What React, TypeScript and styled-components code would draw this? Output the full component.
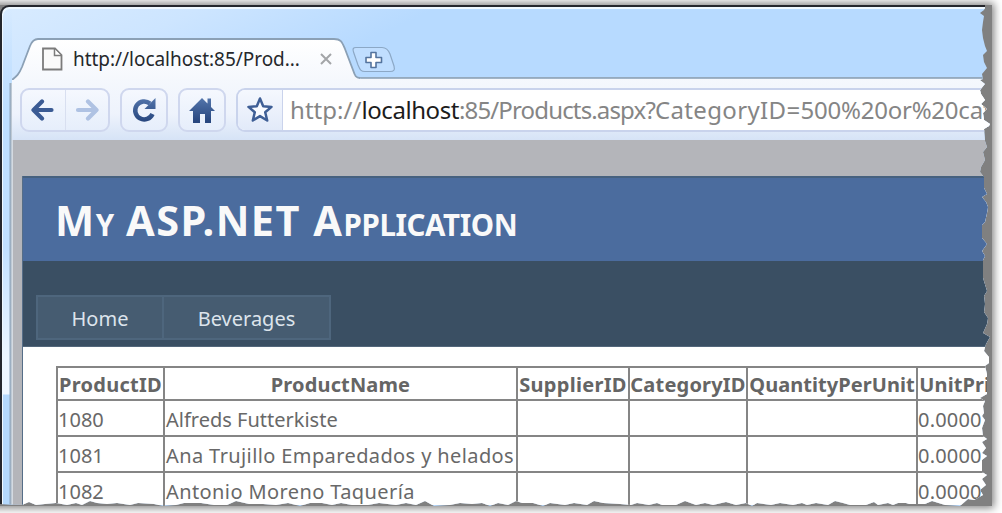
import React from "react";
import styled, { createGlobalStyle } from "styled-components";

const Global = createGlobalStyle`
  * { box-sizing: border-box; }
  html, body { margin: 0; padding: 0; background: #fff; overflow: hidden; }
  body { font-family: "Noto Sans", "Open Sans", sans-serif; }
`;

const TORN_EDGE: number[][] = [
  [0, 2], [2, 1], [5, 0], [985, 0], [985, 3], [984, 5], [980, 8], [984, 11], [983, 17], [982, 25], [983, 33], [985, 41], [987, 46], [983, 50],
  [984, 57], [987, 63], [982, 69], [983, 74], [980, 75], [985, 79], [980, 85], [981, 89], [985, 95], [981, 99], [987, 104],
  [983, 108], [984, 115], [990, 119], [989, 121], [984, 124], [985, 136], [987, 142], [983, 147], [985, 155], [981, 162], [980, 167],
  [984, 172], [984, 183], [987, 189], [982, 192], [986, 197], [988, 202], [987, 208], [985, 217], [982, 220], [982, 233],
  [987, 239], [982, 246], [985, 251], [983, 255], [983, 273], [987, 286], [984, 291], [985, 299], [984, 307], [988, 313],
  [987, 319], [983, 328], [990, 332], [986, 339], [984, 346], [989, 352], [989, 358], [985, 361], [987, 369], [987, 389],
  [980, 393], [985, 396], [983, 401], [984, 408], [982, 411], [985, 415], [982, 423], [983, 431], [987, 434], [982, 437],
  [986, 443], [982, 448], [987, 451], [982, 455], [982, 467], [987, 470], [982, 474], [986, 480], [980, 485], [983, 490],
  [974, 495], [968, 494], [960, 501], [945, 500], [932, 496], [925, 499], [909, 499], [906, 498], [898, 498], [893, 500],
  [888, 498], [878, 500], [874, 497], [866, 500], [850, 500], [843, 498], [835, 496], [828, 500], [816, 498], [807, 500],
  [802, 498], [793, 500], [780, 498], [771, 500], [757, 498], [752, 501], [746, 498], [736, 500], [726, 497], [713, 500],
  [705, 498], [696, 500], [685, 496], [676, 500], [662, 500], [657, 498], [649, 500], [637, 498], [631, 500], [620, 499],
  [603, 498], [594, 496], [587, 500], [574, 498], [565, 500], [550, 498], [543, 501], [533, 498], [522, 498], [516, 496],
  [508, 500], [498, 498], [490, 501], [482, 498], [472, 499], [460, 498], [450, 500], [434, 501], [425, 496], [416, 500],
  [406, 498], [396, 500], [379, 498], [368, 500], [352, 500], [341, 498], [332, 500], [322, 498], [310, 498], [300, 501],
  [288, 498], [276, 500], [263, 499], [249, 499], [236, 496], [227, 500], [214, 500], [201, 498], [184, 498], [176, 500],
  [163, 501], [154, 499], [138, 498], [130, 500], [117, 498], [107, 499], [97, 498], [90, 496], [82, 500], [76, 498],
  [67, 500], [56, 498], [45, 499], [36, 500], [29, 497], [22, 500], [0, 499],
];
const tornPolygon = `polygon(${TORN_EDGE.map(([x, y]) => `${x}px ${y}px`).join(",")})`;

const Stage = styled.main`
  position: relative;
  width: 1002px;
  height: 513px;
  padding-top: 5px;
  overflow: hidden;
`;

const Shadow = styled.div`
  position: absolute;
  inset: 5px 10px 7px -14px;
  background: #808080;
  box-shadow: 0 0 8px 2px #808080;
`;

const Torn = styled.div`
  position: relative;
  width: 992px;
  height: 502px;
  clip-path: ${tornPolygon};
`;

const Window = styled.div`
  height: 502px;
  padding-left: 10px;
  border: solid #24262c;
  border-width: 2px 0 0 2px;
  border-radius: 9px 0 0 0;
  background:
    linear-gradient(to right, transparent 7px, #8fa5bb 8px, #a8b8c8 9px, #d4dae1 10px) 0 76px / 11px 440px no-repeat,
    linear-gradient(to bottom, transparent, #bddeff 110px, #c1e0ff 240px, #edf6ff 350px, #eff7ff 387px, #b4d8fc 388px) 0 0 / 10px 100% no-repeat,
    linear-gradient(155deg, #d8ebff 0, #cde5ff 85px, #b7daff 185px);
  box-shadow: inset 1px 2px 0 #eff8ff;
`;

const TabStrip = styled.div`
  display: flex;
  align-items: flex-end;
  height: 72px;
  &::after {
    content: "";
    flex: 1;
    height: 2px;
    margin-left: -37px;
    background: linear-gradient(#8fa5ba, #a8b9cb);
  }
`;

const Tab = styled.div`
  position: relative;
  display: flex;
  align-items: center;
  width: 348px;
  height: 42px;
  padding: 0 28px 0 29px;
  font-size: 19px;
  color: #25282c;
`;

const TabShape = styled.svg`
  position: absolute;
  left: 0;
  top: 0;
`;

const FileIcon = styled.svg`
  position: relative;
  margin: 2px 10px 0 0;
  flex: none;
`;

const TabTitle = styled.span`
  position: relative;
  flex: 1;
  padding-top: 2px;
  white-space: nowrap;
  letter-spacing: -0.04px;
`;

const CloseIcon = styled.svg`
  position: relative;
  margin-top: 1px;
`;

const NewTab = styled.svg`
  margin: 0 0 6px -8px;
  position: relative;
  flex: none;
`;

const Toolbar = styled.div`
  display: flex;
  height: 61px;
  padding: 9px 0 8px 8px;
  background: linear-gradient(#f5f8fd, #eef3fc 35px, #d6e3f6);
`;

const ButtonGroup = styled.div<{ $width: number; $gap: number }>`
  display: flex;
  flex: none;
  width: ${(p) => p.$width}px;
  height: 44px;
  margin-right: ${(p) => p.$gap}px;
  border: 2px solid #cfd7ee;
  border-radius: 9px;
  background: linear-gradient(#f5f8fe, #e6eefb);
`;

const ToolButton = styled.button<{ $divided?: boolean }>`
  display: flex;
  flex: 1;
  align-items: center;
  justify-content: center;
  padding: 0;
  border: 0;
  border-left: ${(p) => (p.$divided ? "1px solid #d8dff0" : "0")};
  background: none;
`;

const AddressBar = styled.div`
  display: flex;
  flex: 1;
  height: 44px;
  border: solid #c9d3ec;
  border-width: 2px 0 2px 2px;
  border-radius: 9px 0 0 9px;
  background: #fff;
  overflow: hidden;
`;

const StarCell = styled.div`
  display: flex;
  flex: none;
  align-items: center;
  justify-content: center;
  width: 45px;
  border-right: 1px solid #cad3ec;
  background: linear-gradient(#f5f8fe, #e2eaf9);
`;

const Url = styled.div`
  padding-left: 7px;
  font-size: 24px;
  line-height: 40px;
  white-space: nowrap;
  color: #858585;
`;

const UrlPart = styled.span<{ $spacing: number; $host?: boolean }>`
  letter-spacing: ${(p) => p.$spacing}px;
  color: ${(p) => (p.$host ? "#1c1c1c" : "inherit")};
`;

const Viewport = styled.div`
  height: 365px;
  margin-left: 1px;
  padding: 36px 0 0 9px;
  background: #b4b5ba;
`;

const Page = styled.div`
  height: 329px;
  border-left: 1px solid #566e88;
  background: #fff;
`;

const Header = styled.header`
  height: 85px;
  padding-left: 32px;
  border-top: 2px solid #46617f;
  background: #4b6c9e;
`;

const Title = styled.h1`
  margin: 0;
  font-size: 41.5px;
  line-height: 85px;
  letter-spacing: 1.5px;
  white-space: nowrap;
  color: #f9f9f9;
`;

const SmallCaps = styled.span`
  font-size: 29.5px;
  letter-spacing: -0.4px;
  text-transform: uppercase;
`;

const Nav = styled.nav`
  display: flex;
  height: 86px;
  padding: 34px 0 0 13px;
  border-bottom: 1px solid #53677b;
  background: #3a4f63;
`;

const NavItem = styled.a<{ $width: number }>`
  width: ${(p) => p.$width}px;
  height: 45px;
  margin-right: -2px;
  border: 2px solid #4e667d;
  background: #465c71;
  color: #dde4ec;
  font-size: 20px;
  line-height: 44px;
  text-align: center;
`;

const Grid = styled.table`
  width: 958px;
  margin: 19px 0 0 33px;
  border-collapse: collapse;
  table-layout: fixed;
  font-size: 20px;
  color: #686868;
`;

const Cell = styled.td<{ $spacing?: number; $indent?: number }>`
  height: 36px;
  padding: 3px 0 0 ${(p) => p.$indent ?? 0}px;
  border: 2px solid #858585;
  line-height: 31px;
  white-space: nowrap;
  letter-spacing: ${(p) => p.$spacing ?? 0}px;
`;

const HeadCell = styled(Cell)`
  height: 33px;
  padding: 2px 0 0;
  line-height: 29px;
  font-weight: 700;
  text-align: center;
  color: #656565;
`;

const columns = [
  { name: "ProductID", width: 107, spacing: 0.25 },
  { name: "ProductName", width: 353, spacing: 0.15 },
  { name: "SupplierID", width: 112, spacing: 0.3 },
  { name: "CategoryID", width: 118, spacing: 0.2 },
  { name: "QuantityPerUnit", width: 170, spacing: 0.05 },
  { name: "UnitPrice", width: 98, spacing: 0.1 },
];

const rows = [
  { id: "1080", name: "Alfreds Futterkiste", spacing: 0 },
  { id: "1081", name: "Ana Trujillo Emparedados y helados", spacing: 0.39 },
  { id: "1082", name: "Antonio Moreno Taquería", spacing: 0.4 },
];

const ink = "url(#ink)";

export default function App() {
  return (
    <Stage>
      <Global />
      <Shadow />
      <Torn>
        <Window>
          <TabStrip>
            <Tab>
              <TabShape width="350" height="43" viewBox="0 0 350 43">
                <defs>
                  <linearGradient id="tabFill" x1="0" y1="0" x2="0" y2="1">
                    <stop offset="0" stopColor="#ffffff" />
                    <stop offset="1" stopColor="#f5f8fd" />
                  </linearGradient>
                </defs>
                <path
                  d="M0 43C5 39 7 37 10 30L18 9C20 4 22 2 26 2H322C329 2 330 5 333 12L341 33C343 39 345 41 349 42V43Z"
                  fill="url(#tabFill)"
                />
                <path
                  d="M0 43C5 39 7 37 10 30L18 9C20 4 22 2 26 2H322C329 2 330 5 333 12L341 33C343 39 344 41 348 41"
                  fill="none" stroke="#8ba0b5" strokeWidth="1.8"
                />
              </TabShape>
              <FileIcon width="22" height="24" viewBox="0 0 22 24">
                <path d="M2 1.5H14L20.5 8V22.5H2Z" fill="#fafafa" stroke="#7b7b7b" strokeWidth="1.8" />
                <path d="M13.5 2V8.5H20" fill="#fff" stroke="#7b7b7b" strokeWidth="1.5" />
              </FileIcon>
              <TabTitle>http://localhost:85/Prod...</TabTitle>
              <CloseIcon width="12" height="12" viewBox="0 0 12 12">
                <path d="M1 1L11 11M11 1L1 11" stroke="#a3a5a8" strokeWidth="2" />
              </CloseIcon>
            </Tab>
            <NewTab width="44" height="27" viewBox="0 0 44 27">
              <path
                d="M4 1.5H30C34 1.5 36 3 38 8L42 20C43 24 42 25.5 38 25.5H13C9 25.5 8 24 6 19L1.5 6C.5 3 1 1.5 4 1.5Z"
                fill="#c0deff" stroke="#8ca8c6" strokeWidth="1.2"
              />
              <path d="M19 6.5H24V11.5H29.500V16.500H24V21.500H19V16.500H14V11.500H19Z" fill="#fff" stroke="#54749e" strokeWidth="1.6" strokeLinejoin="round" />
            </NewTab>
          </TabStrip>
          <Toolbar>
            <ButtonGroup $width={90} $gap={10}>
              <ToolButton>
                <svg width="24" height="24" viewBox="0 0 24 24">
                  <defs>
                    <linearGradient id="ink" gradientUnits="userSpaceOnUse" x1="0" y1="0" x2="0" y2="24">
                      <stop offset="0" stopColor="#5577ad" />
                      <stop offset="1" stopColor="#28477f" />
                    </linearGradient>
                  </defs>
                  <path d="M11 3.500L2.500 12L11 20.500M3 12H20.500" fill="none" stroke="#3b5b94" strokeWidth="4.200" strokeLinecap="round" strokeLinejoin="round" />
                </svg>
              </ToolButton>
              <ToolButton $divided>
                <svg width="24" height="24" viewBox="0 0 24 24">
                  <path d="M13 3.500L21.500 12L13 20.500M21 12H3" fill="none" stroke="#afc2e3" strokeWidth="4.200" strokeLinecap="round" strokeLinejoin="round" />
                </svg>
              </ToolButton>
            </ButtonGroup>
            <ButtonGroup $width={48} $gap={10}>
              <ToolButton>
                <svg width="26" height="26" viewBox="0 0 26 26">
                  <path d="M19 6.500A9 9 0 1 0 21.500 17" fill="none" stroke={ink} strokeWidth="4.500" />
                  <path d="M24.500 1V12H13.500L17.500 8Z" fill={ink} />
                </svg>
              </ToolButton>
            </ButtonGroup>
            <ButtonGroup $width={48} $gap={10}>
              <ToolButton>
                <svg width="26" height="27" viewBox="0 0 26 27">
                  <path d="M13 1L18.500 6.500V1.500H22V10L26 14H22V26H16V17H11V26H4V14H0Z" fill={ink} />
                </svg>
              </ToolButton>
            </ButtonGroup>
            <AddressBar>
              <StarCell>
                <svg width="28" height="28" viewBox="0 0 28 28">
                  <path d="M14 2.500L17.200 10.200L25.500 10.900L19.200 16.300L21.200 24.500L14 20.100L6.800 24.500L8.800 16.300L2.500 10.900L10.800 10.200Z" fill="#f8faff" stroke="#3f5f96" strokeWidth="2.500" strokeLinejoin="round" />
                </svg>
              </StarCell>
              <Url>
                <UrlPart $spacing={0.05}>http://</UrlPart>
                <UrlPart $spacing={-0.45} $host>localhost</UrlPart>
                <UrlPart $spacing={-0.85}>:85/Products.aspx?</UrlPart>
                <UrlPart $spacing={0.35}>CategoryID=</UrlPart>
                <UrlPart $spacing={-0.23}>500%20or%20cat</UrlPart>
              </Url>
            </AddressBar>
          </Toolbar>
          <Viewport>
            <Page>
              <Header>
                <Title>
                  M<SmallCaps>y</SmallCaps> ASP.NET A<SmallCaps>pplication</SmallCaps>
                </Title>
              </Header>
              <Nav>
                <NavItem $width={128}>Home</NavItem>
                <NavItem $width={169}>Beverages</NavItem>
              </Nav>
              <Grid>
                <colgroup>
                  {columns.map((c) => (
                    <col key={c.name} width={c.width} />
                  ))}
                </colgroup>
                <thead>
                  <tr>
                    {columns.map((c) => (
                      <HeadCell as="th" key={c.name} $spacing={c.spacing}>
                        {c.name}
                      </HeadCell>
                    ))}
                  </tr>
                </thead>
                <tbody>
                  {rows.map((r) => (
                    <tr key={r.id}>
                      <Cell>{r.id}</Cell>
                      <Cell $spacing={r.spacing} $indent={1}>{r.name}</Cell>
                      <Cell />
                      <Cell />
                      <Cell />
                      <Cell $spacing={0.2}>0.0000</Cell>
                    </tr>
                  ))}
                </tbody>
              </Grid>
            </Page>
          </Viewport>
        </Window>
      </Torn>
    </Stage>
  );
}
